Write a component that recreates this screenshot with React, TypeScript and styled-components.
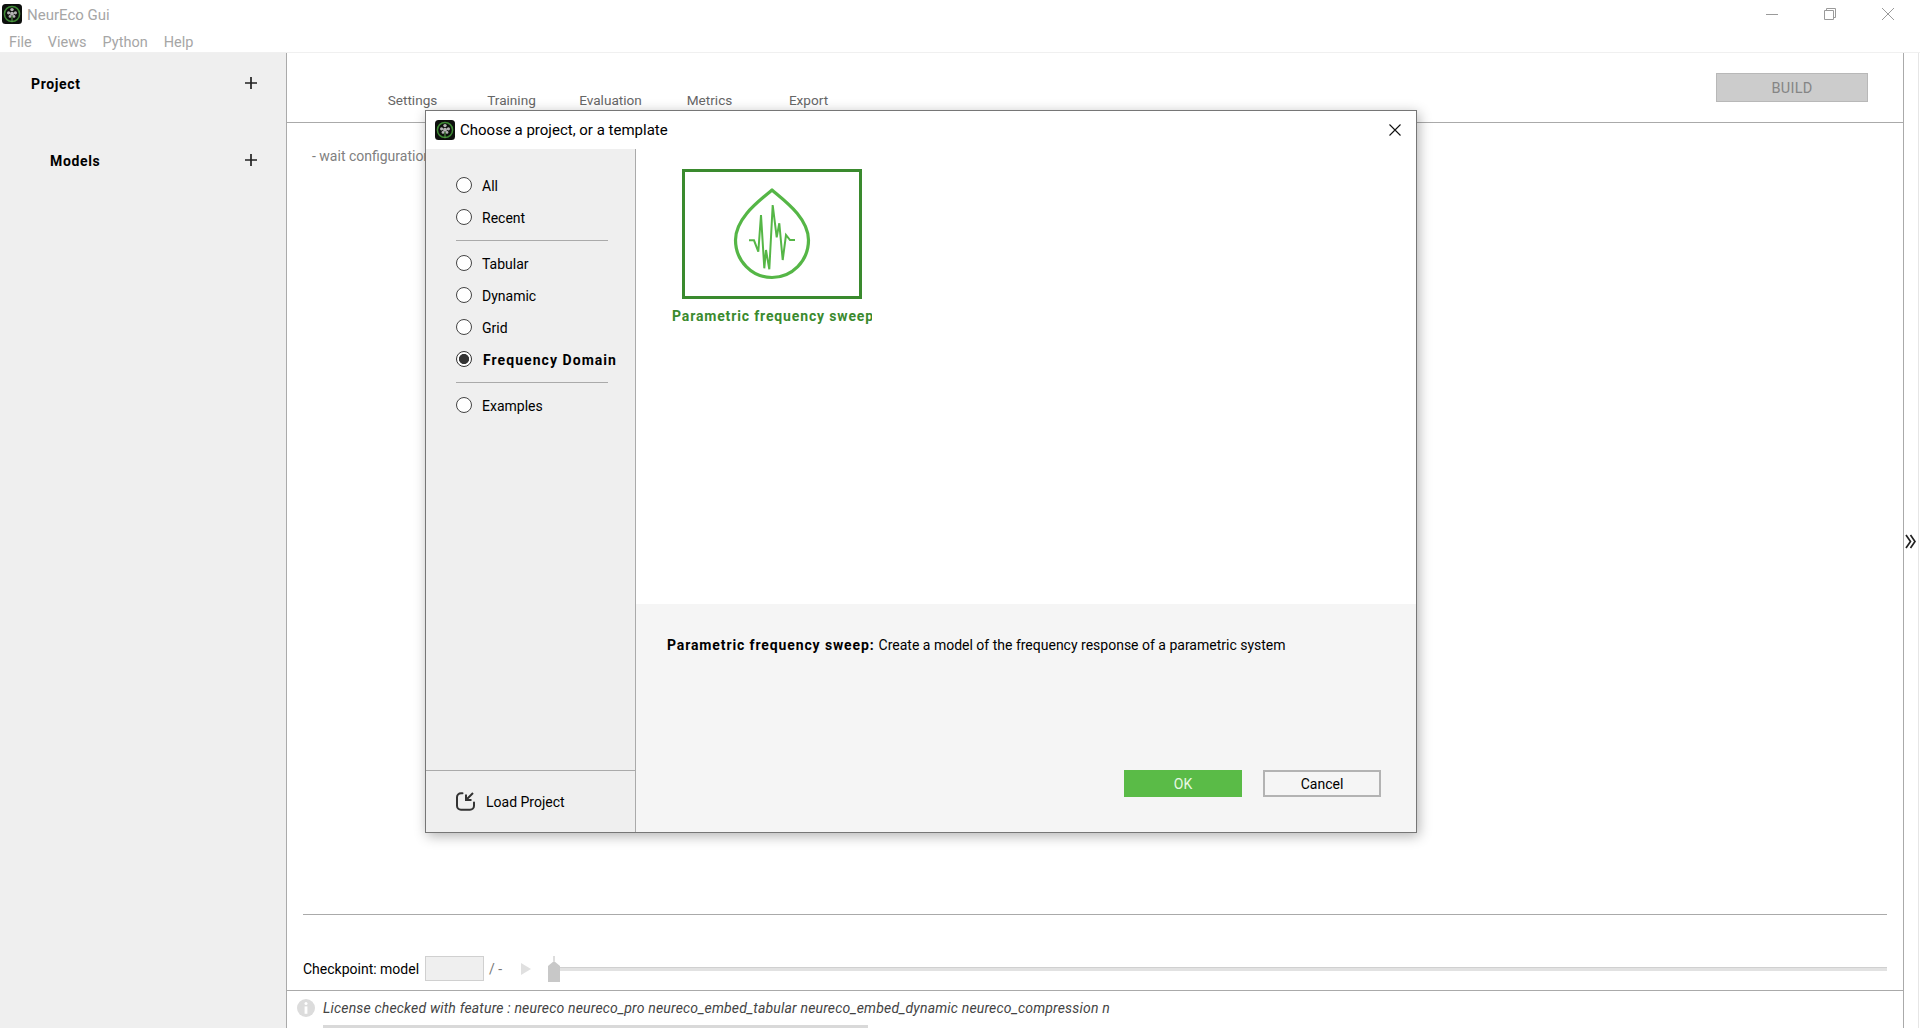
import React from "react";
import styled, { createGlobalStyle } from "styled-components";

const Global = createGlobalStyle`
  html, body { margin: 0; padding: 0; background: #fff; }
  body { font-family: Roboto, "Liberation Sans", sans-serif; font-size: 14px; color: #000; overflow: hidden; }
  * { box-sizing: border-box; }
`;

const Page = styled.div`
  position: relative;
  width: 1920px;
  height: 1028px;
  display: flex;
  flex-direction: column;
  overflow: hidden;
`;

const TitleBar = styled.div`
  height: 28px;
  display: flex;
  align-items: center;
  padding-left: 2px;
  flex: none;
`;

const AppTitle = styled.span`
  margin-left: 5px;
  padding-top: 2px;
  font-size: 15px;
  color: #a6a6a6;
`;

const WindowButtons = styled.div`
  margin-left: auto;
  display: flex;
  align-items: center;
  gap: 46px;
  padding-right: 26px;
`;

const MenuBar = styled.div`
  height: 25px;
  flex: none;
  display: flex;
  align-items: center;
  gap: 16px;
  padding: 4px 0 0 9px;
  border-bottom: 1px solid #f0f0f0;
`;

const MenuItem = styled.span`
  font-size: 14.5px;
  color: #a6a6a6;
`;

const Body = styled.div`
  flex: 1;
  display: flex;
  min-height: 0;
`;

const Sidebar = styled.aside`
  width: 287px;
  flex: none;
  background: #efefef;
  border-right: 1px solid #aaaaaa;
  padding-top: 21px;
`;

const SideRow = styled.div<{ $indent: number }>`
  height: 20px;
  display: flex;
  align-items: center;
  justify-content: space-between;
  padding-left: ${(p) => p.$indent}px;
  padding-right: 29px;
  font-weight: 700;
  font-size: 14px;
  letter-spacing: 0.65px;
  margin-bottom: 57px;
`;

const SidePlus = styled.svg`
  margin-top: -2px;
`;

const Main = styled.main`
  flex: 1;
  min-width: 0;
  display: flex;
  flex-direction: column;
`;

const Header = styled.div`
  height: 70px;
  flex: none;
  display: flex;
  align-items: flex-end;
  padding: 0 35px 0 76px;
  border-bottom: 1px solid #aaaaaa;
  position: relative;
`;

const Tab = styled.span`
  width: 99px;
  text-align: center;
  color: #666666;
  font-size: 13.6px;
  padding-bottom: 14px;
`;

const BuildButton = styled.button`
  margin-left: auto;
  align-self: flex-start;
  margin-top: 20px;
  width: 152px;
  height: 29px;
  padding: 2px 0 0;
  background: #cccccc;
  border: 1px solid #b8b8b8;
  color: #858585;
  font: 14.5px Roboto, sans-serif;
  letter-spacing: 0.3px;
`;

const Content = styled.div`
  flex: 1;
  padding: 25px 16px 0 25px;
  color: #808080;
  font-size: 14px;
`;

const CheckpointArea = styled.div`
  height: 76px;
  flex: none;
  margin: 0 16px;
  border-top: 1px solid #aaaaaa;
  display: flex;
  align-items: center;
  padding-top: 32px;
  font-size: 14px;
`;

const StepInput = styled.div`
  width: 59px;
  height: 25px;
  margin-left: 6px;
  background: #efefef;
  border: 1px solid #d0d0d0;
`;

const OfText = styled.span`
  margin-left: 5px;
  color: #777777;
`;

const PlayIcon = styled.svg`
  margin-left: 18px;
  flex: none;
`;

const Slider = styled.div`
  position: relative;
  margin-left: 16px;
  flex: 1;
  height: 24px;
  display: flex;
  align-items: center;
`;

const SliderTrack = styled.div`
  flex: 1;
  height: 4px;
  background: #e2e2e2;
  border-top: 1px solid #d0d0d0;
`;

const SliderThumb = styled.svg`
  flex: none;
  display: block;
`;

const Footer = styled.div`
  height: 38px;
  flex: none;
  border-top: 1px solid #aaaaaa;
  position: relative;
  display: flex;
  align-items: flex-start;
  padding: 8px 0 0 10px;
`;

const LicenseText = styled.span`
  margin-left: 8px;
  padding-top: 1px;
  font-style: italic;
  font-size: 14px;
  letter-spacing: 0.18px;
  color: #444444;
`;

const HScroll = styled.div`
  position: absolute;
  left: 36px;
  bottom: 0;
  width: 545px;
  height: 3px;
  background: #d9d9d9;
`;

const RightStrip = styled.div`
  width: 16px;
  flex: none;
  margin-right: 1px;
  border-left: 1px solid #aaaaaa;
  border-right: 1px solid #e6e6e6;
  display: flex;
  align-items: center;
  justify-content: center;
  padding: 2px 1px 0 0;
`;

const Dialog = styled.section`
  position: absolute;
  left: 425px;
  top: 110px;
  width: 992px;
  height: 723px;
  background: #fff;
  border: 1px solid #767676;
  box-shadow: 2px 3px 12px rgba(0, 0, 0, 0.3);
  display: flex;
  flex-direction: column;
`;

const DialogTitle = styled.div`
  height: 38px;
  flex: none;
  display: flex;
  align-items: center;
  padding: 0 15px 0 9px;
  font-size: 15px;
`;

const DialogTitleText = styled.span`
  margin-left: 5px;
`;

const CloseButton = styled.span`
  margin-left: auto;
  display: flex;
`;

const DialogBody = styled.div`
  flex: 1;
  display: flex;
  min-height: 0;
`;

const Categories = styled.nav`
  width: 210px;
  flex: none;
  background: #efefef;
  border-right: 1px solid #aaaaaa;
  display: flex;
  flex-direction: column;
`;

const RadioList = styled.div`
  flex: 1;
  padding: 20px 0 0 30px;
`;

const RadioRow = styled.label<{ $checked?: boolean }>`
  height: 32px;
  display: flex;
  align-items: center;
  padding-top: 2px;
  font-size: 14px;
  font-weight: ${(p) => (p.$checked ? 700 : 400)};
  letter-spacing: ${(p) => (p.$checked ? 1.05 : 0)}px;
  white-space: nowrap;
`;

const RadioCircle = styled.span<{ $checked?: boolean }>`
  width: 16px;
  height: 16px;
  flex: none;
  border-radius: 50%;
  border: ${(p) => (p.$checked ? "1.5px solid #333" : "1px solid #444444")};
  background: ${(p) => (p.$checked ? "radial-gradient(circle, #333 0 4.7px, #fff 5.4px)" : "#fff")};
  margin: 0 ${(p) => (p.$checked ? 11 : 10)}px 2px 0;
`;

const CategoryRule = styled.hr`
  width: 152px;
  height: 1px;
  border: 0;
  background: #aaaaaa;
  margin: 7px 0 6px;
`;

const LoadProject = styled.div`
  height: 62px;
  flex: none;
  border-top: 1px solid #aaaaaa;
  display: flex;
  align-items: center;
  padding-left: 30px;
  gap: 11px;
  font-size: 14px;
`;

const Pane = styled.div`
  flex: 1;
  min-width: 0;
  display: flex;
  flex-direction: column;
`;

const Gallery = styled.div`
  height: 455px;
  flex: none;
  padding: 20px 0 0 36px;
`;

const TemplateItem = styled.div`
  width: 200px;
  overflow: hidden;
`;

const TemplateFrame = styled.div`
  width: 180px;
  height: 130px;
  margin: 0 10px;
  border: 3px solid #3a8a2e;
  display: flex;
  align-items: flex-start;
  justify-content: center;
  padding-top: 15px;
`;

const TemplateName = styled.div`
  margin-top: 9px;
  font-size: 14px;
  font-weight: 700;
  color: #3a8a2e;
  white-space: nowrap;
  letter-spacing: 0.85px;
`;

const Details = styled.div`
  flex: 1;
  background: #f5f5f5;
  padding: 33px 35px 35px 31px;
  display: flex;
  flex-direction: column;
  justify-content: space-between;
`;

const Description = styled.p`
  margin: 0;
  font-size: 14px;
`;

const DescriptionName = styled.strong`
  font-weight: 700;
  letter-spacing: 0.88px;
  margin-right: 4px;
`;

const DialogActions = styled.div`
  display: flex;
  justify-content: flex-end;
  gap: 21px;
`;

const ActionButton = styled.button<{ $primary?: boolean }>`
  width: 118px;
  height: 27px;
  font: 14px Roboto, sans-serif;
  background: ${(p) => (p.$primary ? "#5abb47" : "#f5f5f5")};
  color: ${(p) => (p.$primary ? "#e8f8e4" : "#000")};
  border: ${(p) => (p.$primary ? "0" : "2px solid #b3b3b3")};
  padding: 0;
`;

function Logo() {
  return (
    <svg width="20" height="20" viewBox="0 0 20 20" aria-hidden="true">
      <rect width="20" height="20" rx="3.5" fill="#0d0f0d" />
      <circle cx="10" cy="10" r="7.6" fill="none" stroke="#3f8a35" strokeWidth="1.5" />
      <g fill="#b4b4b4">
        <circle cx="10" cy="5.6" r="1.7" />
        <circle cx="6.6" cy="8.8" r="1.6" />
        <circle cx="13.4" cy="8.8" r="1.6" />
        <circle cx="10" cy="9.8" r="2" />
        <circle cx="8" cy="12.4" r="1.4" />
        <circle cx="12" cy="12.4" r="1.4" />
      </g>
      <path d="M10 12v6" stroke="#5aa64c" strokeWidth="1" />
    </svg>
  );
}

function Plus() {
  return (
    <SidePlus width="12" height="12" viewBox="0 0 12 12" aria-hidden="true">
      <path d="M6 0v12M0 6h12" stroke="#222" strokeWidth="1.7" />
    </SidePlus>
  );
}

function DropIcon() {
  return (
    <svg width="78" height="94" viewBox="0 0 78 94" aria-hidden="true" fill="none">
      <path
        d="M39 3C26 14 2.5 31 2.5 53C2.5 74 19 90.5 39 90.5C59 90.5 75.5 74 75.5 53C75.5 31 52 14 39 3Z"
        stroke="#55b646"
        strokeWidth="3.2"
        strokeLinejoin="round"
      />
      <polyline
        points="16,53.3 21,53.3 25.3,64.7 28,28 31.3,81.3 33,63 36.3,82.3 39.7,18 43.7,50.3 46.3,36.3 49.7,73 53,48 57,53 62,53"
        stroke="#55b646"
        strokeWidth="2"
        strokeLinejoin="miter"
      />
    </svg>
  );
}

function LoadIcon() {
  return (
    <svg width="19" height="19" viewBox="0 0 19 19" fill="none" aria-hidden="true">
      <path
        d="M6.5 1.2H5a4 4 0 0 0-4 4v8.6a4 4 0 0 0 4 4h9a4 4 0 0 0 4-4v-3.3"
        stroke="#333"
        strokeWidth="2"
        strokeLinecap="round"
      />
      <path d="M17 1L10 8M10 2.5V8h5.5" stroke="#333" strokeWidth="2" />
    </svg>
  );
}

const tabs = ["Settings", "Training", "Evaluation", "Metrics", "Export"];
const menus = ["File", "Views", "Python", "Help"];

export default function App() {
  return (
    <Page>
      <Global />
      <TitleBar>
        <Logo />
        <AppTitle>NeurEco Gui</AppTitle>
        <WindowButtons>
          <svg width="12" height="12" viewBox="0 0 12 12" aria-hidden="true">
            <path d="M0 6.5h12" stroke="#9a9a9a" />
          </svg>
          <svg width="12" height="12" viewBox="0 0 12 12" fill="none" aria-hidden="true">
            <path d="M.5 2.5h9v9h-9zM2.5 2.5V.5h9v9h-2" stroke="#9a9a9a" />
          </svg>
          <svg width="12" height="12" viewBox="0 0 12 12" aria-hidden="true">
            <path d="M0 0l12 12M12 0L0 12" stroke="#9a9a9a" />
          </svg>
        </WindowButtons>
      </TitleBar>
      <MenuBar>
        {menus.map((m) => (
          <MenuItem key={m}>{m}</MenuItem>
        ))}
      </MenuBar>
      <Body>
        <Sidebar>
          <SideRow $indent={31}>
            Project <Plus />
          </SideRow>
          <SideRow $indent={50}>
            Models <Plus />
          </SideRow>
        </Sidebar>
        <Main>
          <Header>
            {tabs.map((t) => (
              <Tab key={t}>{t}</Tab>
            ))}
            <BuildButton>BUILD</BuildButton>
          </Header>
          <Content>- wait configuration</Content>
          <CheckpointArea>
            Checkpoint: model
            <StepInput />
            <OfText>/ -</OfText>
            <PlayIcon width="12" height="14" viewBox="0 0 12 14" aria-hidden="true">
              <path d="M1 1l10 6-10 6z" fill="#e0e0e0" />
            </PlayIcon>
            <Slider>
              <SliderThumb width="12" height="26" viewBox="0 0 12 26" aria-hidden="true">
                <path d="M6 0v5" stroke="#bbb" />
                <path d="M6 5l6 5v16H0V10z" fill="#c8c8c8" />
              </SliderThumb>
              <SliderTrack />
            </Slider>
          </CheckpointArea>
          <Footer>
            <svg width="18" height="18" viewBox="0 0 18 18" aria-hidden="true">
              <circle cx="9" cy="9" r="9" fill="#dcdcdc" />
              <circle cx="9" cy="4.6" r="1.5" fill="#fff" />
              <rect x="7.6" y="7.4" width="2.8" height="7.4" fill="#fff" />
            </svg>
            <LicenseText>
              License checked with feature : neureco neureco_pro neureco_embed_tabular neureco_embed_dynamic neureco_compression n
            </LicenseText>
            <HScroll />
          </Footer>
        </Main>
        <RightStrip>
          <svg width="11" height="15" viewBox="0 0 11 15" fill="none" aria-hidden="true">
            <path d="M1 1l4.5 6.5L1 14M5.5 1L10 7.5 5.5 14" stroke="#222" strokeWidth="1.7" />
          </svg>
        </RightStrip>
      </Body>

      <Dialog>
        <DialogTitle>
          <Logo />
          <DialogTitleText>Choose a project, or a template</DialogTitleText>
          <CloseButton>
            <svg width="12" height="12" viewBox="0 0 12 12" aria-hidden="true">
              <path d="M.5.5l11 11M11.5.5l-11 11" stroke="#111" strokeWidth="1.1" />
            </svg>
          </CloseButton>
        </DialogTitle>
        <DialogBody>
          <Categories>
            <RadioList>
              <RadioRow><RadioCircle />All</RadioRow>
              <RadioRow><RadioCircle />Recent</RadioRow>
              <CategoryRule />
              <RadioRow><RadioCircle />Tabular</RadioRow>
              <RadioRow><RadioCircle />Dynamic</RadioRow>
              <RadioRow><RadioCircle />Grid</RadioRow>
              <RadioRow $checked><RadioCircle $checked />Frequency Domain</RadioRow>
              <CategoryRule />
              <RadioRow><RadioCircle />Examples</RadioRow>
            </RadioList>
            <LoadProject>
              <LoadIcon />
              Load Project
            </LoadProject>
          </Categories>
          <Pane>
            <Gallery>
              <TemplateItem>
                <TemplateFrame>
                  <DropIcon />
                </TemplateFrame>
                <TemplateName>Parametric frequency sweep</TemplateName>
              </TemplateItem>
            </Gallery>
            <Details>
              <Description>
                <DescriptionName>Parametric frequency sweep:</DescriptionName>
                Create a model of the frequency response of a parametric system
              </Description>
              <DialogActions>
                <ActionButton $primary>OK</ActionButton>
                <ActionButton>Cancel</ActionButton>
              </DialogActions>
            </Details>
          </Pane>
        </DialogBody>
      </Dialog>
    </Page>
  );
}
